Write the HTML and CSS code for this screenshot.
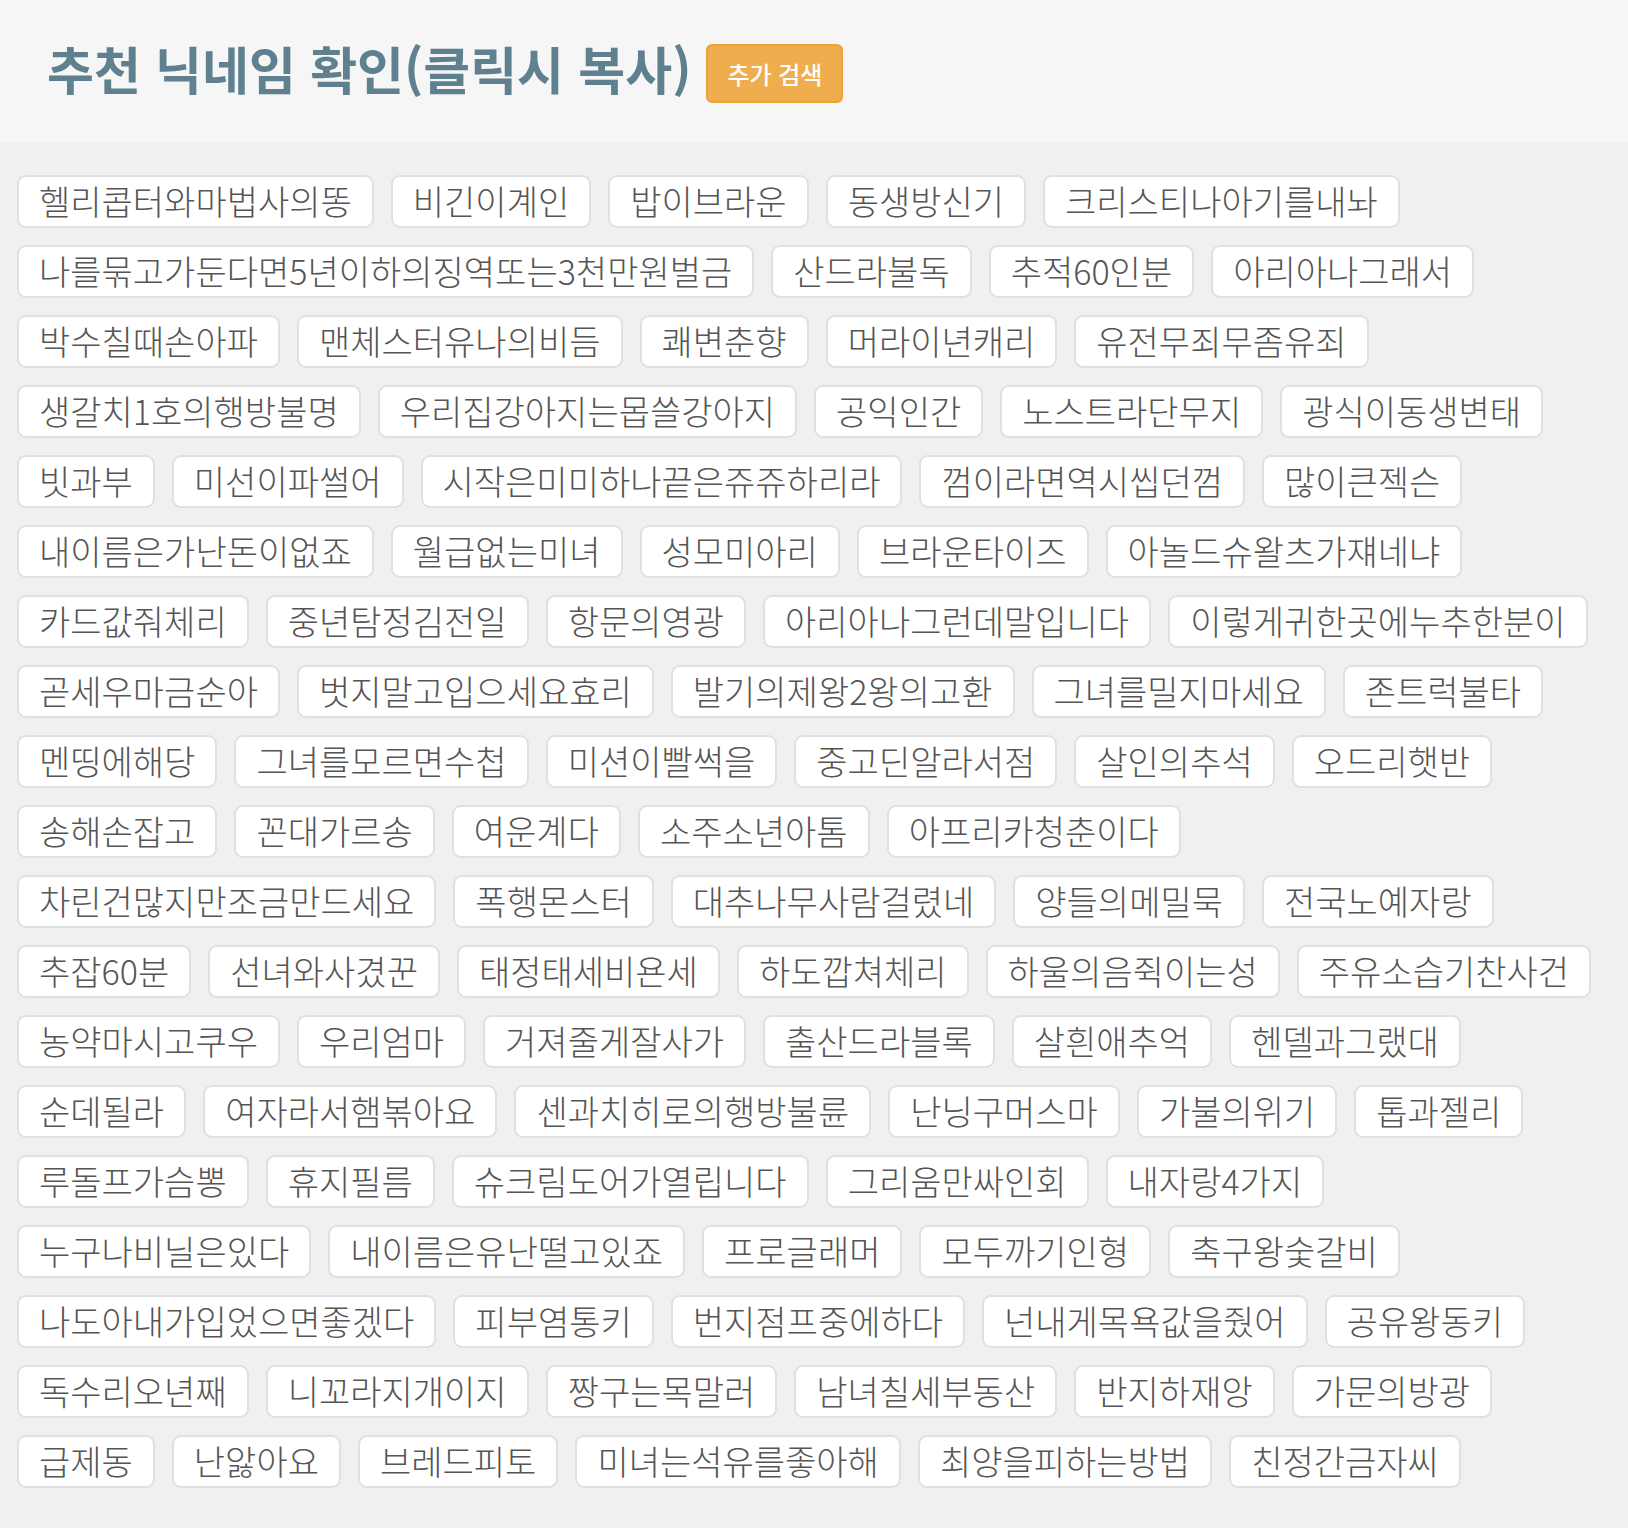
FILE: index.html
```html
<!DOCTYPE html>
<html lang="ko">
<head>
<meta charset="utf-8">
<title>추천 닉네임 확인</title>
<link rel="stylesheet" href="styles.css">
</head>
<body>
<header class="header">
  <h1 class="title">추천 닉네임 확인(클릭시 복사)</h1>
  <button class="btn-more">추가 검색</button>
</header>
<main class="list">
  <span class="chip">헬리콥터와마법사의똥</span>
  <span class="chip">비긴이계인</span>
  <span class="chip">밥이브라운</span>
  <span class="chip">동생방신기</span>
  <span class="chip">크리스티나아기를내놔</span>
  <span class="chip">나를묶고가둔다면5년이하의징역또는3천만원벌금</span>
  <span class="chip">산드라불독</span>
  <span class="chip">추적60인분</span>
  <span class="chip">아리아나그래서</span>
  <span class="chip">박수칠때손아파</span>
  <span class="chip">맨체스터유나의비듬</span>
  <span class="chip">쾌변춘향</span>
  <span class="chip">머라이년캐리</span>
  <span class="chip">유전무죄무좀유죄</span>
  <span class="chip">생갈치1호의행방불명</span>
  <span class="chip">우리집강아지는몹쓸강아지</span>
  <span class="chip">공익인간</span>
  <span class="chip">노스트라단무지</span>
  <span class="chip">광식이동생변태</span>
  <span class="chip">빗과부</span>
  <span class="chip">미선이파썰어</span>
  <span class="chip">시작은미미하나끝은쥬쥬하리라</span>
  <span class="chip">껌이라면역시씹던껌</span>
  <span class="chip">많이큰젝슨</span>
  <span class="chip">내이름은가난돈이없죠</span>
  <span class="chip">월급없는미녀</span>
  <span class="chip">성모미아리</span>
  <span class="chip">브라운타이즈</span>
  <span class="chip">아놀드슈왈츠가쟤네냐</span>
  <span class="chip">카드값줘체리</span>
  <span class="chip">중년탐정김전일</span>
  <span class="chip">항문의영광</span>
  <span class="chip">아리아나그런데말입니다</span>
  <span class="chip">이렇게귀한곳에누추한분이</span>
  <span class="chip">곧세우마금순아</span>
  <span class="chip">벗지말고입으세요효리</span>
  <span class="chip">발기의제왕2왕의고환</span>
  <span class="chip">그녀를밀지마세요</span>
  <span class="chip">존트럭불타</span>
  <span class="chip">멘띵에해당</span>
  <span class="chip">그녀를모르면수첩</span>
  <span class="chip">미션이빨썩을</span>
  <span class="chip">중고딘알라서점</span>
  <span class="chip">살인의추석</span>
  <span class="chip">오드리햇반</span>
  <span class="chip">송해손잡고</span>
  <span class="chip">꼰대가르송</span>
  <span class="chip">여운계다</span>
  <span class="chip">소주소년아톰</span>
  <span class="chip">아프리카청춘이다</span>
  <span class="chip">차린건많지만조금만드세요</span>
  <span class="chip">폭행몬스터</span>
  <span class="chip">대추나무사람걸렸네</span>
  <span class="chip">양들의메밀묵</span>
  <span class="chip">전국노예자랑</span>
  <span class="chip">추잡60분</span>
  <span class="chip">선녀와사겼꾼</span>
  <span class="chip">태정태세비욘세</span>
  <span class="chip">하도깝쳐체리</span>
  <span class="chip">하울의음쥑이는성</span>
  <span class="chip">주유소습기찬사건</span>
  <span class="chip">농약마시고쿠우</span>
  <span class="chip">우리엄마</span>
  <span class="chip">거져줄게잘사가</span>
  <span class="chip">출산드라블록</span>
  <span class="chip">살흰애추억</span>
  <span class="chip">헨델과그랬대</span>
  <span class="chip">순데될라</span>
  <span class="chip">여자라서햄볶아요</span>
  <span class="chip">센과치히로의행방불륜</span>
  <span class="chip">난닝구머스마</span>
  <span class="chip">가불의위기</span>
  <span class="chip">톱과젤리</span>
  <span class="chip">루돌프가슴뽕</span>
  <span class="chip">휴지필름</span>
  <span class="chip">슈크림도어가열립니다</span>
  <span class="chip">그리움만싸인회</span>
  <span class="chip">내자랑4가지</span>
  <span class="chip">누구나비닐은있다</span>
  <span class="chip">내이름은유난떨고있죠</span>
  <span class="chip">프로글래머</span>
  <span class="chip">모두까기인형</span>
  <span class="chip">축구왕숯갈비</span>
  <span class="chip">나도아내가입었으면좋겠다</span>
  <span class="chip">피부염통키</span>
  <span class="chip">번지점프중에하다</span>
  <span class="chip">넌내게목욕값을줬어</span>
  <span class="chip">공유왕동키</span>
  <span class="chip">독수리오년째</span>
  <span class="chip">니꼬라지개이지</span>
  <span class="chip">짱구는목말러</span>
  <span class="chip">남녀칠세부동산</span>
  <span class="chip">반지하재앙</span>
  <span class="chip">가문의방광</span>
  <span class="chip">급제동</span>
  <span class="chip">난앓아요</span>
  <span class="chip">브레드피토</span>
  <span class="chip">미녀는석유를좋아해</span>
  <span class="chip">최양을피하는방법</span>
  <span class="chip">친정간금자씨</span>
</main>
</body>
</html>
```

FILE: styles.css
```css
html, body {
  margin: 0;
  padding: 0;
}
body {
  background: #f0f0f0;
  font-family: "Noto Sans CJK KR", "Noto Sans", sans-serif;
  color: #555;
}
.header {
  height: 143px;
  background: #f6f6f6;
  display: flex;
  align-items: center;
  padding-left: 47px;
  box-sizing: border-box;
  padding-bottom: 6px;
}
.title {
  margin: 0;
  font-size: 51px;
  font-weight: 700;
  color: #5f818f;
  line-height: 1;
}
.btn-more {
  margin-left: 15px;
  width: 137px;
  height: 59px;
  background: #f0ad4e;
  border: 2px solid #eea236;
  border-radius: 6px;
  color: #fff;
  font-family: "Noto Sans CJK KR", "Noto Sans", sans-serif;
  font-size: 24px;
  font-weight: 500;
  padding: 0;
  margin-top: 10px;
}
.list {
  display: flex;
  flex-wrap: wrap;
  gap: 17px 17px;
  padding: 32px 22px 32px 17px;
}
.chip {
  display: inline-block;
  height: 53px;
  box-sizing: border-box;
  line-height: 47px;
  padding: 0 20px;
  background: #fff;
  border: 2px solid #e0e0e0;
  border-radius: 9px;
  font-size: 34px;
  font-weight: 300;
  color: #555;
  white-space: nowrap;
}
```
